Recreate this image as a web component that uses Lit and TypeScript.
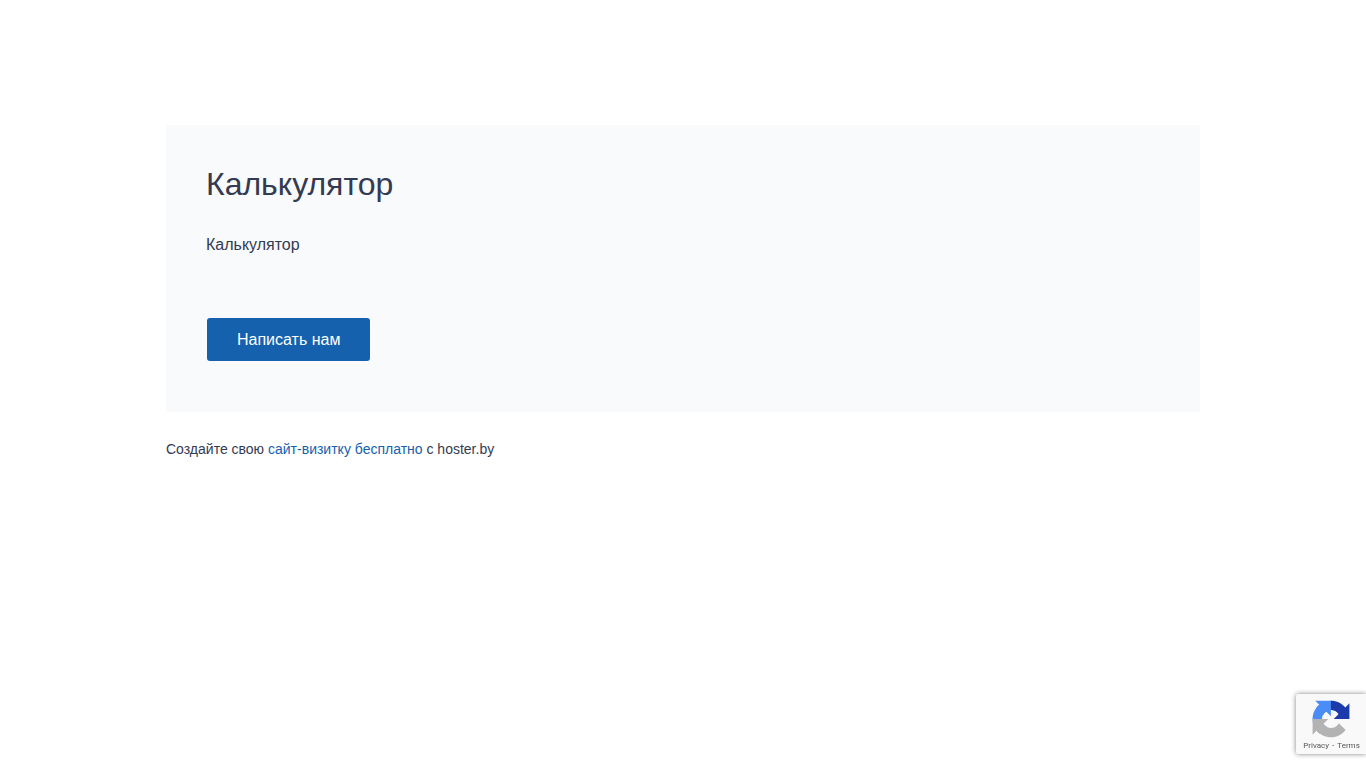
import { LitElement, html, css } from "lit";
import { customElement } from "lit/decorators.js";

@customElement("recaptcha-badge")
export class RecaptchaBadge extends LitElement {
  static styles = css`
    :host {
      position: fixed;
      right: 0;
      bottom: 14px;
      box-sizing: border-box;
      display: flex;
      flex-direction: column;
      align-items: center;
      width: 70px;
      height: 60px;
      padding-top: 6px;
      border-radius: 2px 0 0 2px;
      background: #f9f9f9;
      box-shadow: 0 0 5px gray;
      font-family: Roboto, "Liberation Sans", sans-serif;
    }
    .logo {
      display: block;
      width: 38px;
      height: 38px;
    }
    .links {
      display: flex;
      gap: 3px;
      margin-top: 2px;
      padding-left: 1px;
      font-size: 8px;
      line-height: 12px;
      white-space: nowrap;
      color: #555;
    }
    .link {
      color: inherit;
      text-decoration: none;
    }
  `;

  render() {
    return html`
      <svg class="logo" viewBox="-1 -1 66 66" aria-hidden="true">
        <path fill="#1c3aa9" d="M64 31.955l-.033-1.37V4.687l-7.16 7.16C50.948 4.674 42.033.093 32.05.093c-10.4 0-19.622 4.96-25.458 12.64l11.736 11.86a15.55 15.55 0 0 1 4.754-5.334c2.05-1.6 4.952-2.906 8.968-2.906.485 0 .86.057 1.135.163 4.976.393 9.288 3.14 11.828 7.124l-8.307 8.307L64 31.953"/>
        <path fill="#4a8df6" d="M31.862.094l-1.37.033H4.594l7.16 7.16C4.58 13.147 0 22.06 0 32.046c0 10.4 4.96 19.622 12.64 25.458L24.5 45.768a15.55 15.55 0 0 1-5.334-4.754c-1.6-2.05-2.906-4.952-2.906-8.968 0-.485.057-.86.163-1.135.393-4.976 3.14-9.288 7.124-11.828l8.307 8.307L31.86.095"/>
        <path fill="#b3b3b3" d="M.001 32.045l.033 1.37v25.898l7.16-7.16c5.86 7.173 14.774 11.754 24.76 11.754 10.4 0 19.622-4.96 25.458-12.64l-11.736-11.86a15.55 15.55 0 0 1-4.754 5.334c-2.05 1.6-4.952 2.906-8.968 2.906-.485 0-.86-.057-1.135-.163-4.976-.393-9.288-3.14-11.828-7.124l8.307-8.307c-10.522.04-22.4.066-27.295-.005"/>
      </svg>
      <div class="links">
        <a class="link" href="#privacy">Privacy</a>
        <span>-</span>
        <a class="link" href="#terms">Terms</a>
      </div>
    `;
  }
}

@customElement("app-root")
export class AppRoot extends LitElement {
  static styles = css`
    :host {
      display: block;
      font-family: "Liberation Sans", Arial, sans-serif;
      font-size: 16px;
      line-height: 24px;
      color: #333a51;
    }
    .page {
      box-sizing: border-box;
      max-width: 1074px;
      margin: 0 auto;
      padding: 125px 20px 40px;
    }
    .card {
      padding: 40px 40px 51px;
      background: #f9fafc;
    }
    .title {
      margin: 0;
      font-size: 32px;
      line-height: 38px;
      font-weight: 400;
    }
    .text {
      margin: 30px 0 61px;
    }
    .button {
      display: block;
      margin: 0 1px;
      padding: 0 30px;
      border: 0;
      border-radius: 3px;
      background: #1561ae;
      color: #fff;
      font: inherit;
      line-height: 43px;
      cursor: pointer;
    }
    .footer {
      margin-top: 27px;
      font-size: 14px;
      line-height: 21px;
    }
    .link {
      color: #1561ae;
      text-decoration: none;
    }
  `;

  render() {
    return html`
      <div class="page">
        <main class="card">
          <h1 class="title">Калькулятор</h1>
          <p class="text">Калькулятор</p>
          <button class="button" type="button">Написать нам</button>
        </main>
        <footer class="footer">
          Создайте свою <a class="link" href="#create">сайт-визитку бесплатно</a> с hoster.by
        </footer>
      </div>
      <recaptcha-badge></recaptcha-badge>
    `;
  }
}
